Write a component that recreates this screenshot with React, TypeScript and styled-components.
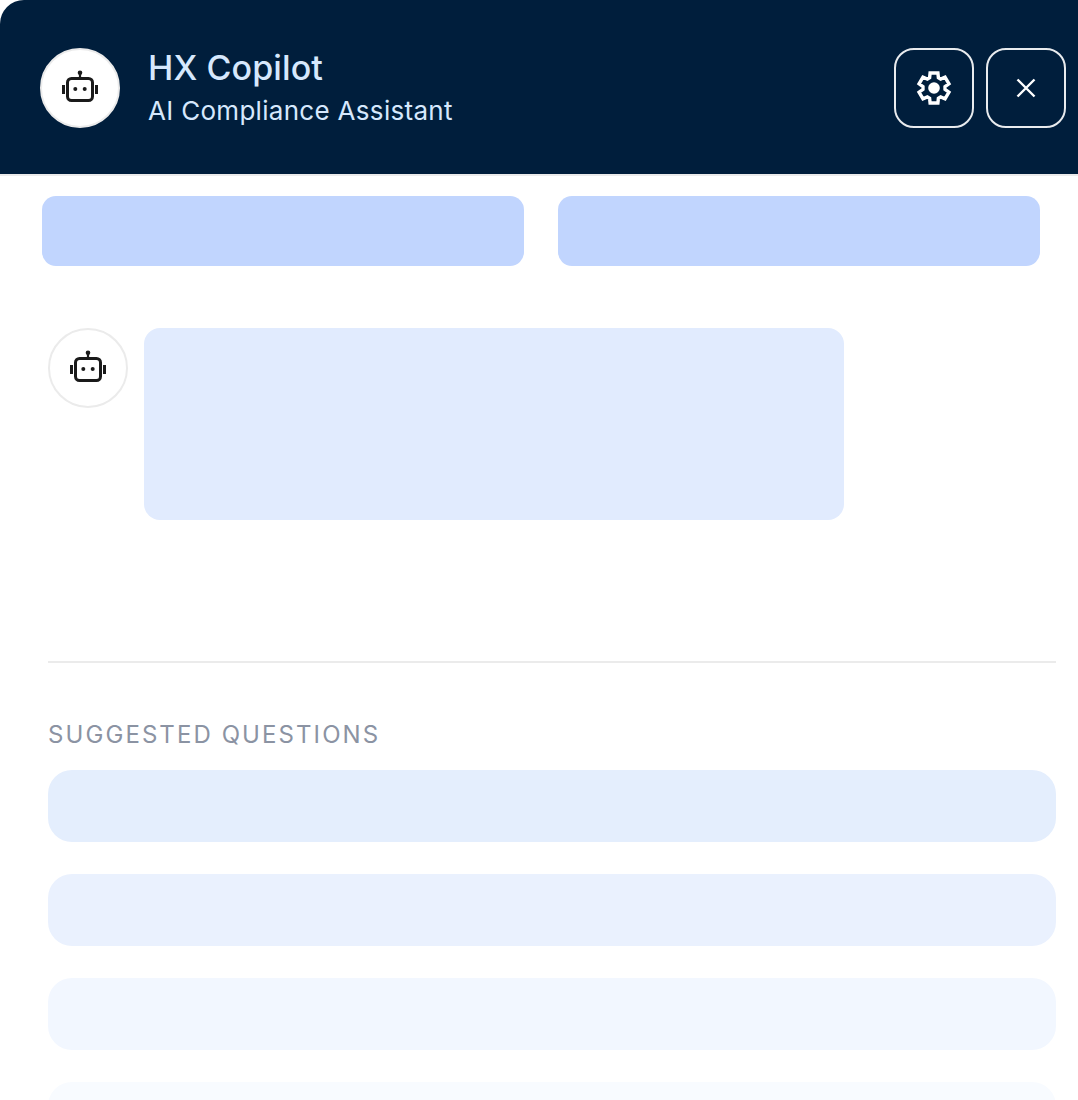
import React from "react";
import styled, { createGlobalStyle } from "styled-components";

const GlobalStyle = createGlobalStyle`
  html, body { margin: 0; padding: 0; background: #ffffff; }
  body { font-family: "Inter", "Liberation Sans", sans-serif; }
`;

function BotIcon() {
  return (
    <svg width="40" height="40" viewBox="0 0 40 40" fill="none">
      <rect x="7.5" y="10.5" width="25" height="22" rx="4" stroke="#1a1a1a" strokeWidth="3" />
      <circle cx="20" cy="4.7" r="2.3" fill="#1a1a1a" />
      <rect x="18.9" y="5" width="2.2" height="5" fill="#1a1a1a" />
      <rect x="2" y="17" width="3" height="9" fill="#1a1a1a" />
      <rect x="35" y="17" width="3" height="9" fill="#1a1a1a" />
      <circle cx="15.3" cy="21" r="2" fill="#1a1a1a" />
      <circle cx="24.7" cy="21" r="2" fill="#1a1a1a" />
    </svg>
  );
}

// six squared teeth, one pointing straight up
function gearPath() {
  const pts: string[] = [];
  for (let i = 0; i < 6; i++) {
    const a = ((-90 + i * 60) * Math.PI) / 180;
    const dx = Math.cos(a);
    const dy = Math.sin(a);
    const px = -dy;
    const py = dx;
    const add = (r: number, w: number) =>
      pts.push(`${(20 + dx * r + px * w).toFixed(2)} ${(20 + dy * r + py * w).toFixed(2)}`);
    add(10.2, -4.4);
    add(15, -3.9);
    add(15, 3.9);
    add(10.2, 4.4);
  }
  return `M${pts.join("L")}Z`;
}

function GearIcon() {
  return (
    <svg width="40" height="40" viewBox="0 0 40 40" fill="none">
      <path d={gearPath()} stroke="#ffffff" strokeWidth="3.4" strokeLinejoin="miter" />
      <circle cx="20" cy="20" r="5.8" fill="#ffffff" />
    </svg>
  );
}

function CloseIcon() {
  return (
    <svg width="40" height="40" viewBox="0 0 40 40" fill="none">
      <path d="M11.5 11.5l17 17M28.5 11.5l-17 17" stroke="#ffffff" strokeWidth="2.4" />
    </svg>
  );
}

export default function App() {
  return (
    <>
      <GlobalStyle />
      <Panel>
        <Header>
          <Brand>
            <HeaderAvatar>
              <BotIcon />
            </HeaderAvatar>
            <Titles>
              <Title>HX Copilot</Title>
              <Subtitle>AI Compliance Assistant</Subtitle>
            </Titles>
          </Brand>
          <Actions>
            <IconButton aria-label="Settings">
              <GearIcon />
            </IconButton>
            <IconButton aria-label="Close">
              <CloseIcon />
            </IconButton>
          </Actions>
        </Header>
        <Body>
          <UserRow>
            <UserBlock />
            <UserBlock />
          </UserRow>
          <BotRow>
            <BotAvatar>
              <BotIcon />
            </BotAvatar>
            <Bubble />
          </BotRow>
          <Divider />
          <SectionLabel>SUGGESTED QUESTIONS</SectionLabel>
          <Questions>
            <Question $tone="#e4eefd" />
            <Question $tone="#eaf1fe" />
            <Question $tone="#f2f7ff" />
            <Question $tone="#f8fbff" />
          </Questions>
        </Body>
      </Panel>
    </>
  );
}

const Panel = styled.div`
  width: 1078px;
  height: 1100px;
  overflow: hidden;
  background: #ffffff;
`;

const Header = styled.header`
  height: 176px;
  box-sizing: border-box;
  padding: 48px 12px 46px 40px;
  display: flex;
  align-items: center;
  justify-content: space-between;
  background: #001e3c;
  border-top-left-radius: 24px;
  border-bottom: 2px solid #ebebeb;
`;

const Brand = styled.div`
  display: flex;
  align-items: center;
  gap: 28px;
`;

const Avatar = styled.div`
  width: 80px;
  height: 80px;
  box-sizing: border-box;
  border-radius: 50%;
  background: #ffffff;
  border: 2px solid #ebebeb;
  display: flex;
  align-items: center;
  justify-content: center;
  flex-shrink: 0;
`;

const HeaderAvatar = styled(Avatar)``;

const BotAvatar = styled(Avatar)``;

const Titles = styled.div`
  display: flex;
  flex-direction: column;
  gap: 4px;
`;

const Title = styled.div`
  font-size: 34px;
  line-height: 42px;
  font-weight: 500;
  letter-spacing: 0.1px;
  color: #d6e8fd;
`;

const Subtitle = styled.div`
  font-size: 26px;
  line-height: 36px;
  letter-spacing: 0.3px;
  color: #d6e8fd;
`;

const Actions = styled.div`
  display: flex;
  gap: 12px;
`;

const IconButton = styled.button`
  width: 80px;
  height: 80px;
  box-sizing: border-box;
  padding: 0;
  border: 2px solid #e8ebee;
  border-radius: 20px;
  background: transparent;
  display: flex;
  align-items: center;
  justify-content: center;
`;

const Body = styled.main`
  padding: 20px 22px 0 48px;
`;

const UserRow = styled.div`
  display: flex;
  gap: 34px;
  margin: 0 16px 0 -6px;
`;

const UserBlock = styled.div`
  flex: 1;
  height: 70px;
  border-radius: 14px;
  background: #c1d5fe;
`;

const BotRow = styled.div`
  display: flex;
  gap: 16px;
  margin-top: 62px;
`;

const Bubble = styled.div`
  width: 700px;
  height: 192px;
  border-radius: 16px;
  background: #e1ebfe;
`;

const Divider = styled.div`
  height: 2px;
  margin-top: 141px;
  background: #ebebeb;
`;

const SectionLabel = styled.div`
  margin-top: 58px;
  font-size: 24px;
  line-height: 28px;
  letter-spacing: 2.08px;
  color: #8b93a3;
`;

const Questions = styled.div`
  display: flex;
  flex-direction: column;
  gap: 32px;
  margin-top: 21px;
`;

const Question = styled.div<{ $tone: string }>`
  height: 72px;
  border-radius: 24px;
  background: ${(p) => p.$tone};
`;
